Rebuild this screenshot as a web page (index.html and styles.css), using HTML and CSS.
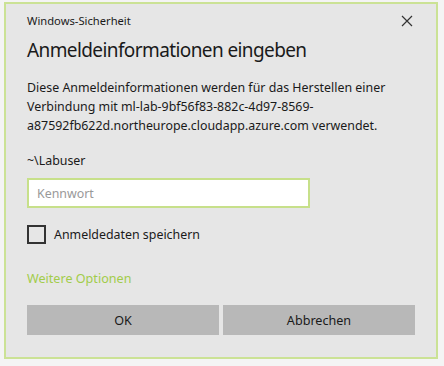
FILE: index.html
```html
<!DOCTYPE html>
<html lang="de">
<head>
    <meta charset="UTF-8">
    <title>Windows-Sicherheit</title>
    <link rel="stylesheet" href="styles.css">
</head>
<body>

    <!-- Dialog -->
    <div class="dialog">
        <div class="titlebar">
            <span class="app-name">Windows-Sicherheit</span>
            <svg class="close" width="12" height="12" viewBox="0 0 12 12">
                <path d="M1 1 L11 11 M11 1 L1 11" stroke="#333" stroke-width="1.2" fill="none"/>
            </svg>
        </div>

        <h1 class="heading">Anmeldeinformationen eingeben</h1>

        <p class="info">Diese Anmeldeinformationen werden für das Herstellen einer Verbindung mit ml-lab-9bf56f83-882c-4d97-8569-a87592fb622d.northeurope.cloudapp.azure.com verwendet.</p>

        <p class="user">~\Labuser</p>

        <input class="password" type="password" placeholder="Kennwort">

        <label class="remember">
            <span class="box"></span>
            Anmeldedaten speichern
        </label>

        <a class="more" href="#">Weitere Optionen</a>

        <div class="buttons">
            <button class="btn">OK</button>
            <button class="btn">Abbrechen</button>
        </div>
    </div>

</body>
</html>
```

FILE: styles.css
```css
/* Basic Reset */
* {
    margin: 0;
    padding: 0;
    box-sizing: border-box;
}

body {
    font-family: 'Noto Sans', 'Open Sans', sans-serif;
    background-color: #f4f4f4;
    color: #1a1a1a;
}

/* Dialog frame */
.dialog {
    width: 434px;
    height: 357px;
    margin: 2px 0 0 4px;
    background-color: #e6e6e6;
    border: 2px solid #cbe295;
    padding: 0 21px;
}

.titlebar {
    display: flex;
    justify-content: space-between;
    align-items: center;
    height: 32px;
    padding-top: 1px;
}

.app-name {
    font-size: 11.2px;
}

.close {
    margin-right: 2px;
}

.heading {
    font-size: 19px;
    font-weight: normal;
    letter-spacing: -0.6px;
    line-height: 28px;
}

.info {
    font-size: 12.4px;
    line-height: 19px;
    margin-top: 14px;
    width: 380px;
}

.user {
    font-size: 12.4px;
    line-height: 19px;
    margin-top: 16px;
}

.password {
    display: block;
    width: 283px;
    height: 30px;
    margin-top: 8px;
    border: 2px solid #c7e08a;
    background: #fff;
    padding: 0 8px;
    font-family: inherit;
    font-size: 12.4px;
    outline: none;
}

.password::placeholder {
    color: #999;
}

.remember {
    display: flex;
    align-items: center;
    gap: 8px;
    margin-top: 17px;
    font-size: 12.4px;
}

.box {
    width: 19px;
    height: 19px;
    border: 2px solid #333;
}

.more {
    display: block;
    margin-top: 26px;
    font-size: 12.6px;
    color: #a2cc4a;
    text-decoration: none;
}

.buttons {
    display: flex;
    gap: 4px;
    margin-top: 18px;
}

.btn {
    width: 192px;
    height: 30px;
    border: none;
    background-color: #b8b8b8;
    font-family: inherit;
    font-size: 12.6px;
    color: #1a1a1a;
}
```
